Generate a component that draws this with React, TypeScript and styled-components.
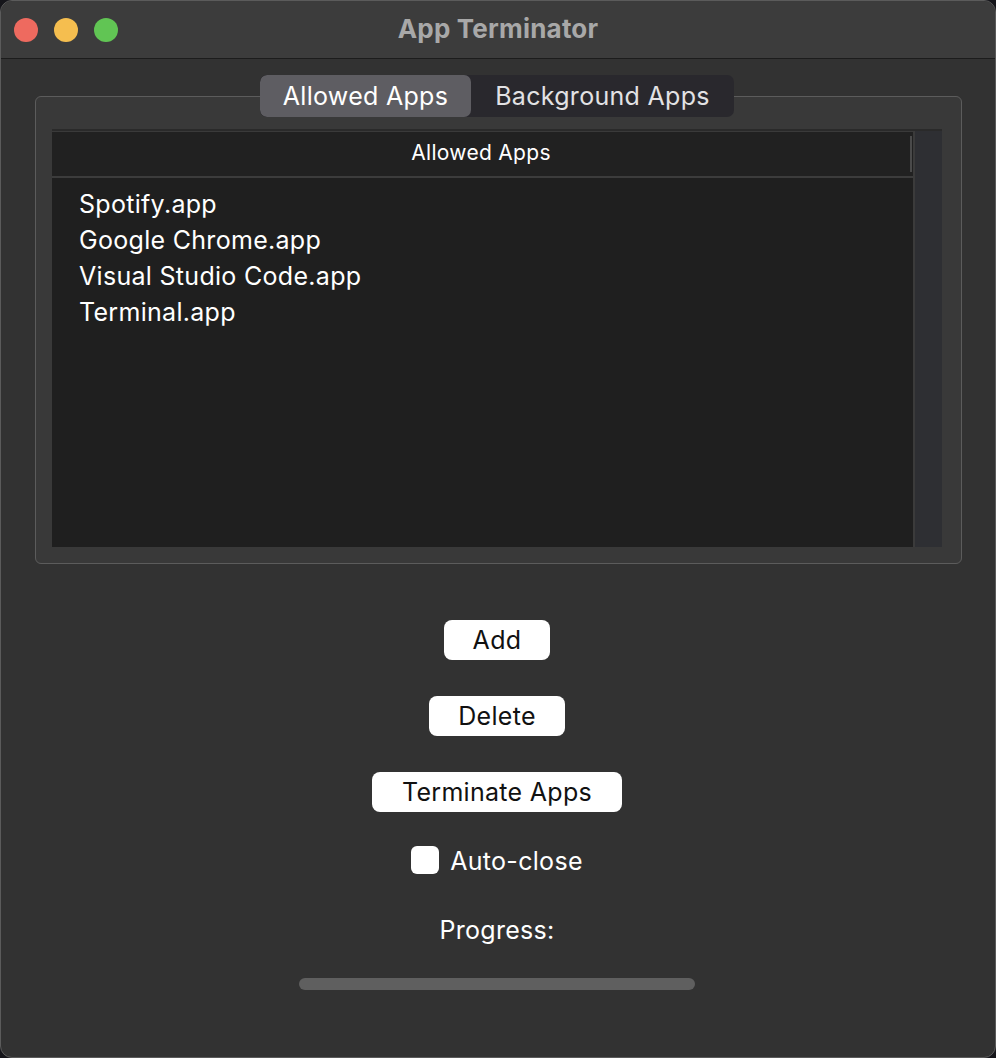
import React, { useState } from 'react';
import styled, { createGlobalStyle } from 'styled-components';

const GlobalStyle = createGlobalStyle`
  html, body {
    margin: 0;
    padding: 0;
    background: #15151a;
  }
  body {
    font-family: Inter, "Noto Sans", "Liberation Sans", sans-serif;
  }
`;

const Window = styled.div`
  width: 996px;
  height: 1058px;
  box-sizing: border-box;
  border: 1px solid #5b5b5b;
  border-radius: 12px;
  overflow: hidden;
  background: #323232;
  display: flex;
  flex-direction: column;
`;

const TitleBar = styled.div`
  height: 57px;
  flex-shrink: 0;
  background: #3c3c3c;
  border-bottom: 1px solid #1c1c1c;
  display: grid;
  grid-template-columns: 1fr auto 1fr;
  align-items: center;
  padding: 0 13px;
`;

const Lights = styled.div`
  display: flex;
  gap: 16px;
`;

const Light = styled.span<{ $color: string }>`
  width: 24px;
  height: 24px;
  border-radius: 50%;
  background: ${(p) => p.$color};
`;

const Title = styled.div`
  font-size: 26px;
  font-weight: 700;
  color: #a8a8a8;
  letter-spacing: 0.2px;
  margin-top: -2px;
`;

const Body = styled.div`
  flex: 1;
  display: flex;
  flex-direction: column;
  align-items: center;
  padding: 16px 33px 0 34px;
`;

const Group = styled.fieldset`
  align-self: stretch;
  margin: 0;
  padding: 12px 19px 16px 16px;
  border: 1px solid #5c5c5c;
  border-radius: 6px;
  background: #393939;
`;

const Tabs = styled.legend`
  margin: 0 auto;
  padding: 0;
  display: flex;
  border-radius: 7px;
  overflow: hidden;
  background: #29282d;
`;

const Tab = styled.button<{ $active?: boolean; $width: number }>`
  width: ${(p) => p.$width}px;
  height: 42px;
  padding: 0;
  border: none;
  border-radius: 7px;
  font-family: inherit;
  font-size: 25px;
  letter-spacing: 0.3px;
  color: ${(p) => (p.$active ? '#ffffff' : '#e2e2e4')};
  background: ${(p) => (p.$active ? '#5e5d62' : 'transparent')};
  cursor: pointer;
`;

const TableWrap = styled.div`
  display: grid;
  grid-template-columns: 1fr 27px;
  height: 416px;
  border-top: 2px solid #2a2a2a;
`;

const Table = styled.div`
  background: #1f1f1f;
  border-right: 2px solid #3b3b3b;
  display: flex;
  flex-direction: column;
`;

const Header = styled.div`
  height: 44px;
  flex-shrink: 0;
  background: #212121;
  border-top: 1px solid #3a3a3a;
  border-bottom: 2px solid #3c3c3c;
  display: flex;
  align-items: center;
`;

const HeaderLabel = styled.div`
  flex: 1;
  text-align: center;
  font-size: 21px;
  letter-spacing: 0.3px;
  color: #ffffff;
  margin-top: -4px;
`;

const ColumnDivider = styled.span`
  width: 2px;
  height: 36px;
  margin-right: 1px;
  background: #4a4a4a;
`;

const Rows = styled.div`
  padding: 8px 0 0 27px;
`;

const Row = styled.div`
  height: 36px;
  line-height: 36px;
  font-size: 25px;
  letter-spacing: 0.3px;
  color: #ffffff;
`;

const ScrollTrack = styled.div`
  background: #2e2f33;
`;

const Actions = styled.div`
  display: flex;
  flex-direction: column;
  align-items: center;
  margin-left: -3px;
`;

const Button = styled.button<{ $width: number; $gap: number }>`
  width: ${(p) => p.$width}px;
  height: 40px;
  margin-top: ${(p) => p.$gap}px;
  border: none;
  border-radius: 8px;
  background: #ffffff;
  color: #111111;
  font-family: inherit;
  font-size: 25px;
  letter-spacing: 0.3px;
  padding: 0;
  cursor: pointer;
`;

const CheckRow = styled.label`
  margin-top: 34px;
  display: flex;
  align-items: center;
  gap: 11px;
  font-size: 25px;
  letter-spacing: 0.3px;
  color: #ffffff;
  cursor: pointer;
`;

const Check = styled.span<{ $on: boolean }>`
  width: 28px;
  height: 28px;
  border-radius: 6px;
  background: ${(p) => (p.$on ? '#2f7cf6' : '#ffffff')};
  margin-top: -3px;
`;

const Label = styled.div`
  margin-top: 39px;
  font-size: 25px;
  letter-spacing: 0.3px;
  color: #ffffff;
`;

const Progress = styled.div`
  margin-top: 33px;
  width: 396px;
  height: 12px;
  border-radius: 6px;
  background: #5f5f5f;
`;

const apps = ['Spotify.app', 'Google Chrome.app', 'Visual Studio Code.app', 'Terminal.app'];

const App: React.FC = () => {
  const [tab, setTab] = useState(0);
  const [auto, setAuto] = useState(false);

  return (
    <>
      <GlobalStyle />
      <Window>
        <TitleBar>
          <Lights>
            <Light $color="#ee6a5f" />
            <Light $color="#f5be4f" />
            <Light $color="#61c554" />
          </Lights>
          <Title>App Terminator</Title>
          <div />
        </TitleBar>
        <Body>
          <Group>
            <Tabs>
              <Tab $width={211} $active={tab === 0} onClick={() => setTab(0)}>Allowed Apps</Tab>
              <Tab $width={263} $active={tab === 1} onClick={() => setTab(1)}>Background Apps</Tab>
            </Tabs>
            <TableWrap>
              <Table>
                <Header>
                  <HeaderLabel>{tab === 0 ? 'Allowed Apps' : 'Background Apps'}</HeaderLabel>
                  <ColumnDivider />
                </Header>
                <Rows>
                  {tab === 0 && apps.map((a) => <Row key={a}>{a}</Row>)}
                </Rows>
              </Table>
              <ScrollTrack />
            </TableWrap>
          </Group>
          <Actions>
            <Button $width={106} $gap={56}>Add</Button>
            <Button $width={136} $gap={36}>Delete</Button>
            <Button $width={250} $gap={36}>Terminate Apps</Button>
            <CheckRow onClick={() => setAuto(!auto)}>
              <Check $on={auto} />
              Auto-close
            </CheckRow>
            <Label>Progress:</Label>
            <Progress />
          </Actions>
        </Body>
      </Window>
    </>
  );
};

export default App;
